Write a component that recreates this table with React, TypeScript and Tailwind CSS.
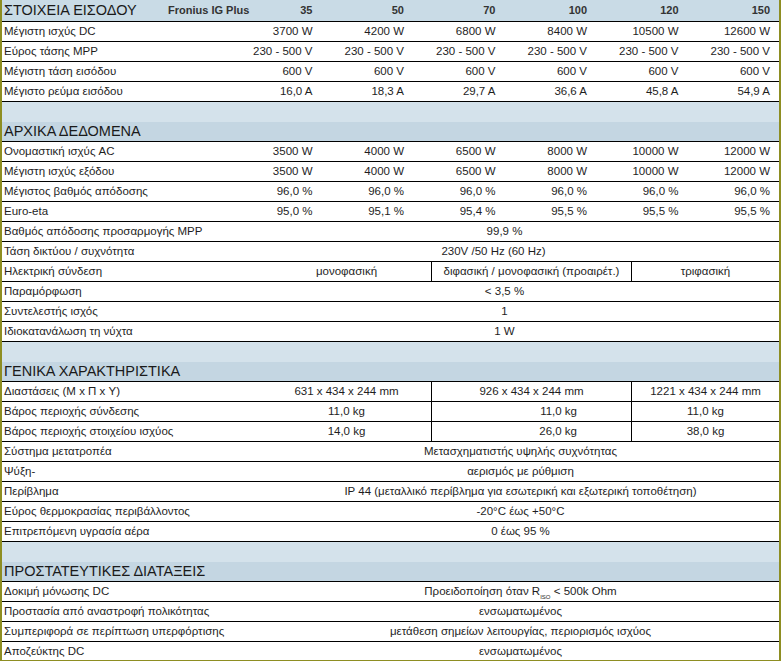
import React from "react";

const font = { fontFamily: '"Liberation Sans", Arial, sans-serif' };

type SixRow = [string, string[]];

const sec1: SixRow[] = [
  ["Μέγιστη ισχύς DC", ["3700 W", "4200 W", "6800 W", "8400 W", "10500 W", "12600 W"]],
  ["Εύρος τάσης MPP", ["230 - 500 V", "230 - 500 V", "230 - 500 V", "230 - 500 V", "230 - 500 V", "230 - 500 V"]],
  ["Μέγιστη τάση εισόδου", ["600 V", "600 V", "600 V", "600 V", "600 V", "600 V"]],
  ["Μέγιστο ρεύμα εισόδου", ["16,0 A", "18,3 A", "29,7 A", "36,6 A", "45,8 A", "54,9 A"]],
];

const sec2: SixRow[] = [
  ["Ονομαστική ισχύς AC", ["3500 W", "4000 W", "6500 W", "8000 W", "10000 W", "12000 W"]],
  ["Μέγιστη ισχύς εξόδου", ["3500 W", "4000 W", "6500 W", "8000 W", "10000 W", "12000 W"]],
  ["Μέγιστος βαθμός απόδοσης", ["96,0 %", "96,0 %", "96,0 %", "96,0 %", "96,0 %", "96,0 %"]],
  ["Euro-eta", ["95,0 %", "95,1 %", "95,4 %", "95,5 %", "95,5 %", "95,5 %"]],
];

function SixValueRow({ label, values }: { label: string; values: string[] }) {
  return (
    <div className="grid h-[20px] grid-cols-[228px_repeat(6,minmax(0,1fr))] items-center border-b border-black text-[11.5px] text-[#1e1e1e]">
      <div className="pl-[2px] whitespace-nowrap">{label}</div>
      {values.map((v, i) => (
        <div key={i} className="pr-[9px] text-right whitespace-nowrap">
          {v}
        </div>
      ))}
    </div>
  );
}

function MergedRow({
  label,
  children,
  wide,
  last,
  shiftLeft,
}: {
  label: string;
  children: React.ReactNode;
  wide?: boolean;
  last?: boolean;
  shiftLeft?: boolean;
}) {
  return (
    <div
      className={
        "flex items-center text-[11.5px] text-[#1e1e1e] " +
        (last ? "h-[19px]" : "h-[20px] border-b border-black")
      }
    >
      <div className={(wide ? "w-[260px]" : "w-[228px]") + " shrink-0 pl-[2px] whitespace-nowrap"}>{label}</div>
      <div className={"flex-1 text-center whitespace-nowrap" + (shiftLeft ? " pr-[22px]" : "")}>{children}</div>
    </div>
  );
}

function TripleRow({
  label,
  a,
  b,
  c,
  bRight,
}: {
  label: string;
  a: string;
  b: string;
  c: string;
  bRight?: boolean;
}) {
  return (
    <div className="flex h-[20px] items-stretch border-b border-black text-[11.5px] text-[#1e1e1e]">
      <div className="flex w-[260px] shrink-0 items-center pl-[2px] whitespace-nowrap">{label}</div>
      <div className="flex w-[169px] shrink-0 items-center justify-center whitespace-nowrap">{a}</div>
      <div
        className={
          "flex w-[200px] shrink-0 items-center border-l border-black whitespace-nowrap " +
          (bRight ? "justify-end pr-[54px]" : "justify-center")
        }
      >
        {b}
      </div>
      <div className="flex flex-1 items-center justify-center border-l border-black whitespace-nowrap">{c}</div>
    </div>
  );
}

function Band({ title }: { title: string }) {
  return (
    <div className="flex h-[40px] flex-col border-b border-black">
      <div className="h-[20px] bg-[#d4e2eb]" />
      <div className="flex h-[19px] items-center bg-[#c4d6e2] pl-[2px] text-[14.5px] leading-none text-[#1a1a1a]">
        {title}
      </div>
    </div>
  );
}

export default function App() {
  return (
    <div className="bg-white" style={font}>
      <div className="h-[661px] w-[781px] overflow-hidden border-x-2 border-b border-[#8e8e22] bg-white">
        {/* Header row */}
        <div className="grid h-[22px] grid-cols-[228px_repeat(6,minmax(0,1fr))] items-center border-b border-black bg-[#c9dbe6] text-[#1a1a1a]">
          <div className="relative flex items-center whitespace-nowrap pl-[2px]">
            <span className="text-[14.5px] leading-none">ΣΤΟΙΧΕΙΑ ΕΙΣΟΔΟΥ</span>
            <span className="absolute left-[166px] text-[11px] font-bold text-[#333]">Fronius IG Plus</span>
          </div>
          {["35", "50", "70", "100", "120", "150"].map((h) => (
            <div key={h} className="pr-[9px] text-right text-[11px] font-bold text-[#333]">
              {h}
            </div>
          ))}
        </div>
        {sec1.map(([l, v]) => (
          <SixValueRow key={l} label={l} values={v} />
        ))}

        <Band title="ΑΡΧΙΚΑ ΔΕΔΟΜΕΝΑ" />
        {sec2.map(([l, v]) => (
          <SixValueRow key={l} label={l} values={v} />
        ))}
        <MergedRow label="Βαθμός απόδοσης προσαρμογής MPP">99,9 %</MergedRow>
        <MergedRow label="Τάση δικτύου / συχνότητα" shiftLeft>
          230V /50 Hz (60 Hz)
        </MergedRow>
        <TripleRow
          label="Ηλεκτρική σύνδεση"
          a="μονοφασική"
          b="διφασική / μονοφασική (προαιρέτ.)"
          c="τριφασική"
        />
        <MergedRow label="Παραμόρφωση">&lt; 3,5 %</MergedRow>
        <MergedRow label="Συντελεστής ισχός">1</MergedRow>
        <MergedRow label="Ιδιοκατανάλωση τη νύχτα">1 W</MergedRow>

        <Band title="ΓΕΝΙΚΑ ΧΑΡΑΚΤΗΡΙΣΤΙΚΑ" />
        <TripleRow
          label="Διαστάσεις (Μ x Π x Υ)"
          a="631 x 434 x 244 mm"
          b="926 x 434 x 244 mm"
          c="1221 x 434 x 244 mm"
        />
        <TripleRow label="Βάρος περιοχής σύνδεσης" a="11,0 kg" b="11,0 kg" c="11,0 kg" bRight />
        <TripleRow label="Βάρος περιοχής στοιχείου ισχύος" a="14,0 kg" b="26,0 kg" c="38,0 kg" bRight />
        <MergedRow wide label="Σύστημα μετατροπέα">Μετασχηματιστής υψηλής συχνότητας</MergedRow>
        <MergedRow wide label="Ψύξη-">αερισμός με ρύθμιση</MergedRow>
        <MergedRow wide label="Περίβλημα">
          IP 44 (μεταλλικό περίβλημα για εσωτερική και εξωτερική τοποθέτηση)
        </MergedRow>
        <MergedRow wide label="Εύρος θερμοκρασίας περιβάλλοντος">-20°C έως +50°C</MergedRow>
        <MergedRow wide label="Επιτρεπόμενη υγρασία αέρα">0 έως 95 %</MergedRow>

        <Band title="ΠΡΟΣΤΑΤΕΥΤΙΚΕΣ ΔΙΑΤΑΞΕΙΣ" />
        <MergedRow wide label="Δοκιμή μόνωσης DC">
          Προειδοποίηση όταν R<sub className="relative top-[1px] text-[6px] align-sub">ISO</sub> &lt; 500k Ohm
        </MergedRow>
        <MergedRow wide label="Προστασία από αναστροφή πολικότητας">ενσωματωμένος</MergedRow>
        <MergedRow wide label="Συμπεριφορά σε περίπτωση υπερφόρτισης">
          μετάθεση σημείων λειτουργίας, περιορισμός ισχύος
        </MergedRow>
        <MergedRow wide last label="Αποζεύκτης DC">
          ενσωματωμένος
        </MergedRow>
      </div>
    </div>
  );
}
